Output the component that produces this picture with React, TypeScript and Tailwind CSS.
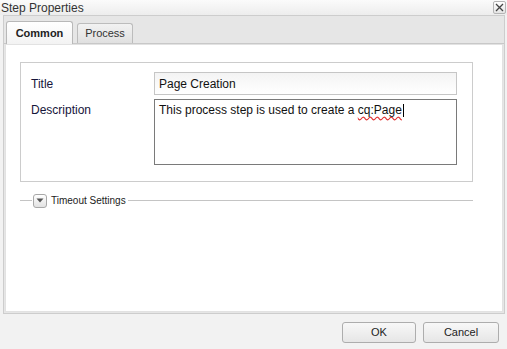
import React from "react";

export default function App() {
  return (
    <div
      className="w-[507px] h-[349px] bg-[#f2f2f2] flex flex-col overflow-hidden text-[#15153a]"
      style={{ fontFamily: '"Liberation Sans", Arial, sans-serif' }}
    >
      {/* Title bar */}
      <div className="h-[15px] flex items-center justify-between bg-gradient-to-b from-[#fbfbfb] to-[#ededed] pl-[1px] pr-[1px]">
        <span className="text-[12px] leading-[14px] text-[#333]">Step Properties</span>
        <div className="w-[13px] h-[13px] border border-[#b5b5b5] rounded-[2px] bg-gradient-to-b from-white to-[#e4e4e4] flex items-center justify-center">
          <svg width="9" height="9" viewBox="0 0 9 9">
            <path d="M1 1 L8 8 M8 1 L1 8" stroke="#444" strokeWidth="1.3" />
          </svg>
        </div>
      </div>

      {/* Main panel */}
      <div className="h-[299px] ml-[3px] mr-[2px] border-l border-r border-b border-t border-[#cdcdcd] bg-[#e6e6e6] flex flex-col">
        {/* Tab strip */}
        <div className="h-[28px] flex items-end pl-[2px] gap-[4px] border-b border-[#c8c8c8]">
          <div className="w-[67px] h-[22px] border border-b-0 border-[#b8b8b8] rounded-t-[3px] bg-gradient-to-b from-white to-[#f3f3f3] flex items-center justify-center text-[11px] font-bold text-[#222] -mb-[1px] h-[23px]">
            Common
          </div>
          <div className="w-[56px] h-[20px] border border-b-0 border-[#bcbcbc] rounded-t-[3px] bg-gradient-to-b from-[#f2f2f2] to-[#e0e0e0] flex items-center justify-center text-[11px] text-[#333]">
            Process
          </div>
        </div>

        {/* White content */}
        <div className="flex-1 mx-[1px] mb-[1px] border border-[#e2e2e2] bg-white pt-[17px] pl-[14px] pr-[29px]">
          <div className="border border-[#cccccc] pt-[9px] pb-[16px] pl-[10px] pr-[15px] flex flex-col gap-[4px]">
            <div className="flex items-center">
              <div className="w-[123px] text-[12px]">Title</div>
              <div className="flex-1 h-[23px] border border-[#c6c6c6] bg-gradient-to-b from-[#f4f4f4] to-white flex items-center pl-[4px] text-[12px] text-[#111]">
                Page Creation
              </div>
            </div>
            <div className="flex items-start">
              <div className="w-[123px] text-[12px] pt-[2px]">Description</div>
              <div className="flex-1 h-[66px] border border-[#7a7a7a] bg-white pl-[4px] pt-[3px] text-[12px] text-[#111] leading-[14px]">
                This process step is used to create a{" "}
                <span className="underline decoration-wavy decoration-[#e03030] underline-offset-2">cq:Page</span>
                <span className="inline-block w-[1px] h-[13px] bg-black align-middle ml-[1px]" />
              </div>
            </div>
          </div>

          <div className="mt-[11px] flex items-center">
            <div className="w-[12px] h-px bg-[#c4c4c4]" />
            <div className="w-[14px] h-[14px] ml-[1px] border border-[#a8a8a8] rounded-[3px] bg-gradient-to-b from-white to-[#e2e2e2] flex items-center justify-center">
              <svg width="8" height="5" viewBox="0 0 8 5">
                <path d="M0.5 0.5 L7.5 0.5 L4 4.5 Z" fill="#555" />
              </svg>
            </div>
            <span className="ml-[4px] mr-[2px] text-[10px] text-[#222]">Timeout Settings</span>
            <div className="flex-1 h-px bg-[#c4c4c4]" />
          </div>
        </div>
      </div>

      {/* Footer */}
      <div className="flex-1 flex items-start justify-end pt-[8px] pr-[8px] gap-[7px]">
        <button className="w-[74px] h-[21px] border border-[#adadad] rounded-[3px] bg-gradient-to-b from-[#f8f8f8] to-[#e6e6e6] text-[11px] text-[#222]">
          OK
        </button>
        <button className="w-[76px] h-[21px] border border-[#adadad] rounded-[3px] bg-gradient-to-b from-[#f8f8f8] to-[#e6e6e6] text-[11px] text-[#222]">
          Cancel
        </button>
      </div>
    </div>
  );
}
